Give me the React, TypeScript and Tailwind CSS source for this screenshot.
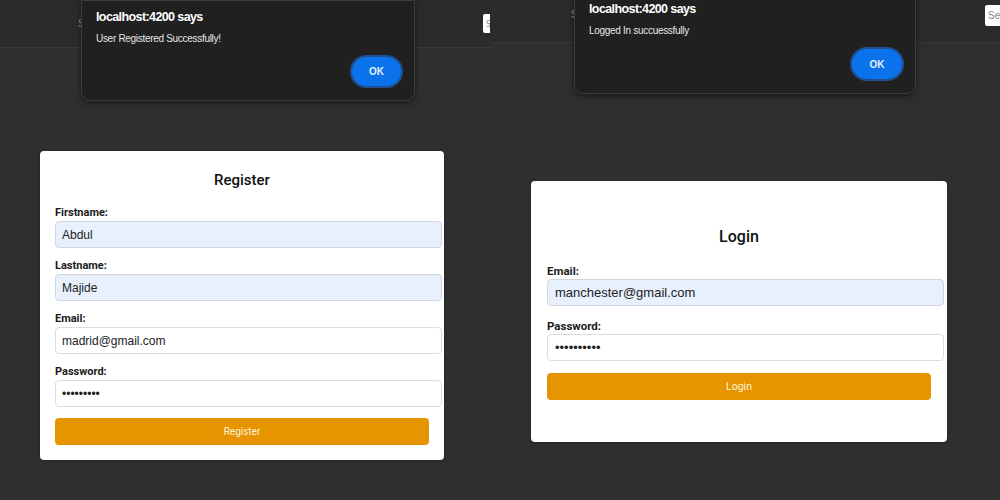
import React from "react";

const roboto = { fontFamily: "Roboto, 'Liberation Sans', sans-serif" };
const arial = { fontFamily: "'Liberation Sans', Arial, sans-serif" };

function Field({
  label,
  value,
  type = "text",
  autofill = false,
  big = false,
}: {
  label: string;
  value: string;
  type?: string;
  autofill?: boolean;
  big?: boolean;
}) {
  return (
    <div className={big ? "mb-[13px]" : "mb-[11px]"}>
      <div
        style={roboto}
        className={
          big
            ? "h-[15px] leading-[15px] text-[11.5px] font-bold text-[#1a1a1a] mb-[0px]"
            : "h-[14px] leading-[14px] text-[11px] font-bold text-[#1a1a1a] mb-[1px]"
        }
      >
        {label}
      </div>
      <input
        readOnly
        type={type}
        value={value}
        style={arial}
        className={
          (big ? "w-[calc(100%+13px)] text-[13px] px-[7px]" : "w-[calc(100%+13px)] text-[12px] px-[6px]") +
          " h-[27px] rounded-[4px] border outline-none text-[#222] " +
          (autofill ? "bg-[#e8f0fe] border-[#cfd6e0]" : "bg-white border-[#dcdcdc]")
        }
      />
    </div>
  );
}

function Dialog({ msg, right = false }: { msg: string; right?: boolean }) {
  return (
    <div
      className={
        "absolute bg-[#202020] border border-[#3c3c3c] rounded-b-[9px] shadow-[0_2px_6px_rgba(0,0,0,0.5)] " +
        (right
          ? "left-[84px] top-[-8px] w-[342px] pl-[14px] pr-[11px] pb-[12px]"
          : "left-[81px] top-[0px] w-[334px] pl-[14px] pr-[11px] pb-[12px]")
      }
    >
      <div
        style={arial}
        className="pt-[8px] h-[25px] leading-[17px] text-[12.5px] font-bold tracking-[-0.6px] text-white"
      >
        localhost:4200 says
      </div>
      <div
        style={arial}
        className="mt-[7px] h-[12px] leading-[12px] text-[10px] tracking-[-0.3px] text-[#e6e6e6]"
      >
        {msg}
      </div>
      <div className="flex justify-end mt-[10px]">
        <div
          className={
            "flex items-center justify-center rounded-full border-[2px] border-[#1f4f8f] bg-[#0a72ea] " +
            (right ? "w-[54px] h-[34px]" : "w-[53px] h-[33px]")
          }
        >
          <span style={arial} className="text-[10px] font-bold text-[#e3efff]">
            OK
          </span>
        </div>
      </div>
    </div>
  );
}

export default function App() {
  return (
    <div className="w-[1000px] h-[500px] flex bg-[#2f2f2f] overflow-hidden">
      {/* Left screenshot */}
      <div className="relative w-[490px] h-full overflow-hidden bg-[#2f2f2f]">
        <div className="h-[48px] bg-[#2b2b2b] border-b border-[#3a3a3a] flex items-center relative">
          <span style={arial} className="ml-[78px] text-[10px] text-[#9a9a9a]">
            S
          </span>
          <div className="absolute left-[483px] top-[14px] w-[40px] h-[19px] bg-white rounded-[2px] pl-[3px] text-[9px] leading-[19px] text-[#888]">
            S
          </div>
        </div>
        <div
          style={roboto}
          className="mt-[103px] ml-[40px] w-[404px] bg-white rounded-[4px] px-[15px] pt-[20px] pb-[15px] shadow-[0_1px_3px_rgba(0,0,0,0.3)]"
        >
          <div className="h-[18px] leading-[18px] text-center text-[15px] font-medium text-[#111] mb-[17px]">
            Register
          </div>
          <Field label="Firstname:" value="Abdul" autofill />
          <Field label="Lastname:" value="Majide" autofill />
          <Field label="Email:" value="madrid@gmail.com" />
          <Field label="Password:" value="madrid123" type="password" />
          <div className="h-[27px] rounded-[4px] bg-[#e69500] flex items-center justify-center text-[10px] text-[#fff3dc]">
            Register
          </div>
        </div>
        <Dialog msg="User Registered Successfully!" />
      </div>

      {/* Right screenshot */}
      <div className="relative flex-1 h-full overflow-hidden bg-[#2f2f2f]">
        <div className="h-[43px] bg-[#2b2b2b] border-b border-[#363636] relative">
          <span style={arial} className="absolute left-[81px] top-[7px] text-[10px] text-[#9a9a9a]">
            S
          </span>
          <div
            style={arial}
            className="absolute left-[495px] top-[5px] w-[40px] h-[21px] bg-white rounded-[2px] pl-[3px] text-[10px] leading-[21px] text-[#888]"
          >
            Se
          </div>
        </div>
        <div
          style={roboto}
          className="mt-[138px] ml-[41px] w-[416px] h-[261px] bg-white rounded-[4px] px-[16px] pt-[46px] shadow-[0_1px_3px_rgba(0,0,0,0.3)]"
        >
          <div className="h-[20px] leading-[20px] text-center text-[16px] font-medium text-[#111] mb-[17px]">
            Login
          </div>
          <Field label="Email:" value="manchester@gmail.com" autofill big />
          <Field label="Password:" value="manchester" type="password" big />
          <div className="-mt-[1px] h-[27px] rounded-[4px] bg-[#e69500] flex items-center justify-center text-[10.5px] text-[#fff3dc]">
            Login
          </div>
        </div>
        <Dialog msg="Logged In succuessfully" right />
      </div>
    </div>
  );
}
